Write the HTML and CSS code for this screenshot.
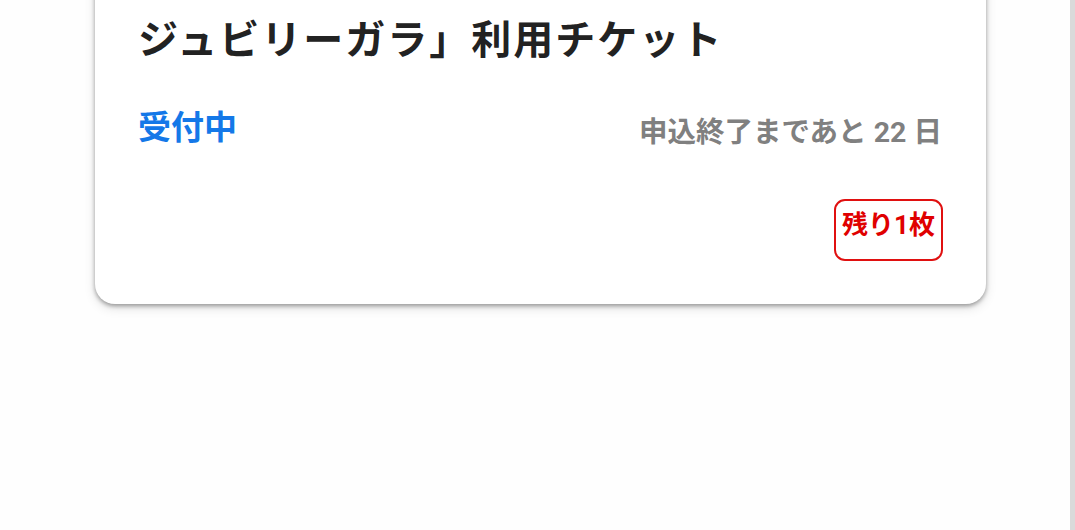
FILE: index.html
```html
<!DOCTYPE html>
<html lang="ja">
<head>
<meta charset="utf-8">
<link rel="stylesheet" href="styles.css">
</head>
<body>
<div class="page">
  <div class="main">
    <div class="card">
      <h1 class="title">ジュビリーガラ」利用チケット</h1>
      <div class="status-row">
        <span class="status">受付中</span>
        <span class="deadline">申込終了まであと 22 日</span>
      </div>
      <div class="badge-row">
        <span class="badge">残り1枚</span>
      </div>
    </div>
  </div>
  <div class="scrollbar"></div>
</div>
</body>
</html>
```

FILE: styles.css
```css
html, body {
  margin: 0;
  padding: 0;
  background: #ffffff;
}
body {
  font-family: Roboto, "Noto Sans CJK JP", sans-serif;
}
.page {
  display: flex;
  height: 530px;
  overflow: hidden;
}
.main {
  flex: 1;
  background: #fefefe;
}
.scrollbar {
  width: 5px;
  background: #dadada;
}
.card {
  margin: -40px 0 0 95px;
  width: 891px;
  box-sizing: border-box;
  padding: 58px 44px 43px 43px;
  background: #ffffff;
  border-radius: 20px;
  box-shadow: 0 2px 4px rgba(0, 0, 0, 0.35), 0 4px 12px rgba(0, 0, 0, 0.12);
}
.title {
  margin: 0;
  font-size: 40px;
  line-height: 46px;
  font-weight: 700;
  letter-spacing: 2px;
  color: #222222;
  white-space: nowrap;
}
.status-row {
  display: flex;
  justify-content: space-between;
  align-items: flex-end;
  margin-top: 44px;
}
.status {
  font-size: 33px;
  line-height: 40px;
  font-weight: 700;
  color: #1478e8;
}
.deadline {
  font-size: 28.5px;
  line-height: 30px;
  font-weight: 700;
  color: #808080;
}
.badge-row {
  display: flex;
  justify-content: flex-end;
  margin-top: 51px;
  margin-right: -1px;
}
.badge {
  display: block;
  border: 2px solid #e01010;
  border-radius: 11px;
  padding: 10px 6px 20px 6px;
  font-size: 26px;
  line-height: 28px;
  font-weight: 700;
  color: #e00000;
}
```
